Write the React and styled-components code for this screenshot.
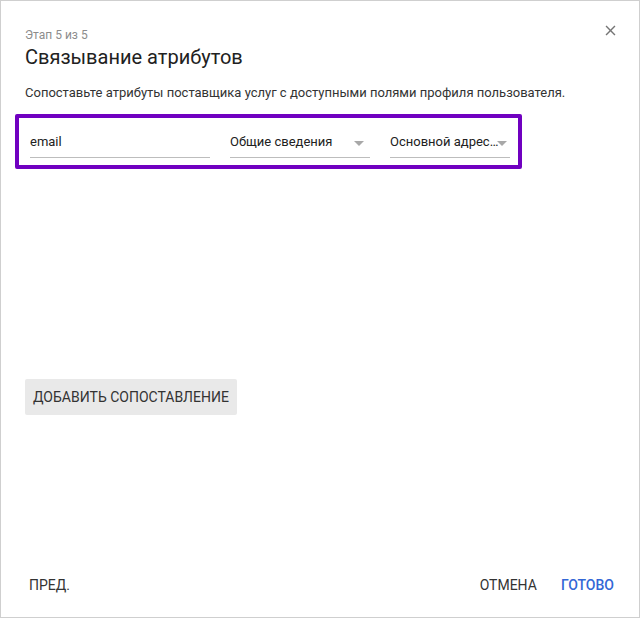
import React from "react";
import styled, { createGlobalStyle } from "styled-components";

const Global = createGlobalStyle`
  html, body { margin: 0; padding: 0; background: #fff; }
  body { font-family: Roboto, "Noto Sans", "Liberation Sans", sans-serif; }
  * { box-sizing: border-box; }
`;

const Dialog = styled.div`
  position: relative;
  width: 640px;
  height: 618px;
  border: 1px solid #cfcfcf;
  background: #fff;
  display: flex;
  flex-direction: column;
`;

const Header = styled.div`
  padding: 27px 24px 0 24px;
`;

const Stage = styled.div`
  font-size: 12px;
  line-height: 14px;
  color: #8c8c8c;
`;

const Title = styled.h1`
  margin: 1px 0 0 0;
  font-size: 20px;
  line-height: 28px;
  font-weight: 400;
  color: #212121;
`;

const CloseButton = styled.button`
  position: absolute;
  top: 21px;
  right: 20px;
  width: 17px;
  height: 17px;
  padding: 0;
  border: 0;
  background: none;
  cursor: pointer;
  display: flex;
  svg { display: block; }
`;

const Body = styled.div`
  padding: 0 24px;
`;

const Description = styled.p`
  margin: 12px 0 0 0;
  font-size: 13px;
  line-height: 20px;
  color: #333;
`;

const MappingRow = styled.div`
  margin: 11px 0 0 -10px;
  width: 507px;
  height: 55px;
  border: 4px solid #7000c0;
  border-radius: 2px;
  padding: 14px 8px 0 11px;
  display: flex;
  gap: 20px;
  align-items: flex-start;
`;

const Field = styled.div`
  position: relative;
  width: ${(p) => p.$w}px;
  border-bottom: 1px solid #bdbdbd;
  padding: 0 0 5px 0;
  font-size: 13px;
  line-height: 20px;
  color: #212121;
  white-space: nowrap;
  overflow: hidden;
`;

const Arrow = styled.span`
  position: absolute;
  right: ${(p) => p.$r}px;
  top: 9px;
  width: 0;
  height: 0;
  border-left: 5px solid transparent;
  border-right: 5px solid transparent;
  border-top: 5px solid #a8a8a8;
`;

const SelectWrap = styled.div`
  position: relative;
`;

const AddButton = styled.button`
  margin-top: 210px;
  height: 36px;
  padding: 0 8px;
  border: 0;
  border-radius: 2px;
  background: #e9e9e9;
  font-family: inherit;
  font-size: 14px;
  font-weight: 400;
  color: #333;
  text-transform: uppercase;
  cursor: pointer;
`;

const Footer = styled.div`
  margin-top: auto;
  padding: 0 17px 14px 20px;
  display: flex;
  align-items: center;
  gap: 8px;
`;

const Spacer = styled.div`
  flex: 1;
`;

const TextButton = styled.button`
  height: 36px;
  padding: 0 8px;
  border: 0;
  background: none;
  font-family: inherit;
  font-size: 14px;
  font-weight: ${(p) => (p.$primary ? 500 : 400)};
  color: ${(p) => (p.$primary ? "#3367d6" : "#333")};
  text-transform: uppercase;
  cursor: pointer;
`;

export default function App() {
  return (
    <>
      <Global />
      <Dialog>
        <Header>
          <Stage>Этап 5 из 5</Stage>
          <Title>Связывание атрибутов</Title>
        </Header>
        <CloseButton aria-label="Закрыть">
          <svg width="17" height="17" viewBox="0 0 24 24">
            <path
              fill="#757575"
              d="M19 6.41L17.59 5 12 10.59 6.41 5 5 6.41 10.59 12 5 17.59 6.41 19 12 13.41 17.59 19 19 17.59 13.41 12z"
            />
          </svg>
        </CloseButton>
        <Body>
          <Description>
            Сопоставьте атрибуты поставщика услуг с доступными полями профиля пользователя.
          </Description>
          <MappingRow>
            <Field $w={180}>email</Field>
            <SelectWrap>
              <Field $w={140}>Общие сведения</Field>
              <Arrow $r={6} />
            </SelectWrap>
            <SelectWrap>
              <Field $w={120}>Основной адрес…</Field>
              <Arrow $r={3} />
            </SelectWrap>
          </MappingRow>
          <AddButton>Добавить сопоставление</AddButton>
        </Body>
        <Footer>
          <TextButton>Пред.</TextButton>
          <Spacer />
          <TextButton>Отмена</TextButton>
          <TextButton $primary>Готово</TextButton>
        </Footer>
      </Dialog>
    </>
  );
}
